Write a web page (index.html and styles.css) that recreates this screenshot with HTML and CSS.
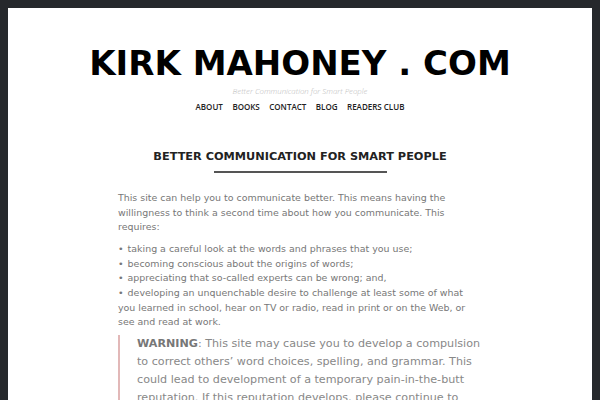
FILE: index.html
```html
<!DOCTYPE html>
<html>
<head>
<meta charset="utf-8">
<link rel="stylesheet" href="styles.css">
</head>
<body>
<div class="page">
  <header class="site-header">
    <h1 class="site-title">KIRK MAHONEY . COM</h1>
    <p class="tagline">Better Communication for Smart People</p>
    <nav class="nav">
      <a>ABOUT</a><a>BOOKS</a><a>CONTACT</a><a>BLOG</a><a>READERS CLUB</a>
    </nav>
  </header>
  <main class="content">
    <h2 class="entry-title">BETTER COMMUNICATION FOR SMART PEOPLE</h2>
    <div class="rule"></div>
    <p class="intro">This site can help you to communicate better. This means having the willingness to think a second time about how you communicate. This requires:</p>
    <ul class="reqs">
      <li>taking a careful look at the words and phrases that you use;</li>
      <li>becoming conscious about the origins of words;</li>
      <li>appreciating that so-called experts can be wrong; and,</li>
      <li>developing an unquenchable desire to challenge at least some of what you learned in school, hear on TV or radio, read in print or on the Web, or see and read at work.</li>
    </ul>
    <blockquote class="warning"><strong>WARNING</strong>: This site may cause you to develop a compulsion to correct others’ word choices, spelling, and grammar. This could lead to development of a temporary pain-in-the-butt reputation. If this reputation develops, please continue to</blockquote>
  </main>
</div>
</body>
</html>
```
FILE: styles.css
```css
html, body { margin: 0; padding: 0; }
body {
  background: #26282c;
  padding: 8px 8px 0 8px;
  height: 400px;
  box-sizing: border-box;
  overflow: hidden;
  font-family: "DejaVu Sans", sans-serif;
}
.page {
  background: #fff;
  height: 392px;
  overflow: hidden;
}
.site-header {
  text-align: center;
  padding-top: 33px;
}
.site-title {
  margin: 0;
  font-family: "DejaVu Sans", sans-serif;
  font-weight: bold;
  font-size: 34px;
  line-height: 44px;
  color: #000;
}
.tagline {
  margin: 0;
  font-family: "Open Sans", sans-serif;
  font-style: italic;
  font-weight: 300;
  font-size: 7.8px;
  line-height: 12px;
  color: #bbb;
}
.nav {
  display: flex;
  justify-content: center;
  gap: 9.5px;
  margin-top: 4px;
  font-family: "Open Sans", sans-serif;
  font-weight: 600;
  font-size: 8px;
  line-height: 12px;
  color: #222;
}
.content {
  width: 364px;
  margin: 0 auto;
  padding-top: 36px;
}
.entry-title {
  margin: 0;
  text-align: center;
  font-size: 11.3px;
  font-weight: bold;
  line-height: 16px;
  color: #222;
}
.rule {
  width: 173px;
  height: 2px;
  background: #555;
  margin: 6px auto 0;
}
.intro {
  margin: 18px 0 7.5px;
  font-size: 9.45px;
  line-height: 14.6px;
  color: #777;
}
.reqs {
  margin: 0;
  padding: 0;
  list-style: none;
  font-size: 9.45px;
  line-height: 14.6px;
  color: #777;
}
.reqs li::before {
  content: "•";
  margin-right: 4px;
}
.warning {
  margin: 5px 0 0 0;
  border-left: 2px solid #e2b8b8;
  padding: 0 0 0 17px;
  font-size: 11.15px;
  line-height: 18px;
  color: #888;
}
.warning strong { color: #777; }
```
